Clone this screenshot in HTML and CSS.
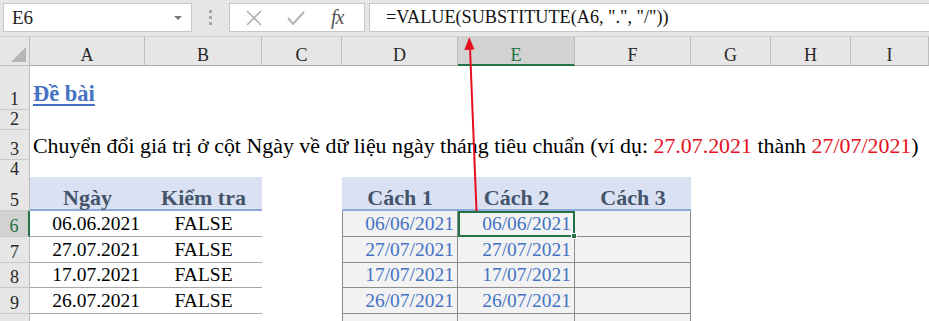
FILE: index.html
```html
<!DOCTYPE html>
<html lang="vi">
<head>
<meta charset="utf-8">
<title>Excel</title>
<link rel="stylesheet" href="styles.css">
</head>
<body>
<div class="app">
  <div class="toolbar">
    <div class="namebox"><span class="namebox-text">E6</span><span class="caret"></span></div>
    <div class="grip"><i></i><i></i><i></i></div>
    <div class="fxbox">
      <svg class="ic" width="18" height="18" viewBox="0 0 18 18"><path d="M2 2 L16 16 M16 2 L2 16" stroke="#b3b3b3" stroke-width="1.6" fill="none"/></svg>
      <svg class="ic" width="20" height="18" viewBox="0 0 20 18"><path d="M2 9 L7 15 L18 3" stroke="#b3b3b3" stroke-width="2" fill="none"/></svg>
      <span class="fx">fx</span>
    </div>
    <div class="formula">=VALUE(SUBSTITUTE(A6, ".", "/"))</div>
  </div>

  <div class="sheet">
    <div class="row hdr">
      <div class="corner"><span class="tri"></span></div>
      <div class="ch">A</div><div class="ch">B</div><div class="ch">C</div><div class="ch">D</div>
      <div class="ch ch-sel">E</div><div class="ch">F</div><div class="ch">G</div><div class="ch">H</div><div class="ch">I</div>
    </div>

    <div class="row r1">
      <div class="rh">1</div>
      <div class="c span"><span class="title">Đề bài</span></div>
    </div>
    <div class="row r2">
      <div class="rh">2</div>
      <div class="c span"></div>
    </div>
    <div class="row r3">
      <div class="rh">3</div>
      <div class="c span text"><span>Chuyển đổi giá trị ở cột Ngày về dữ liệu ngày tháng tiêu chuẩn (ví dụ: <span class="red">27.07.2021</span> thành <span class="red">27/07/2021</span>)</span></div>
    </div>
    <div class="row r4">
      <div class="rh">4</div>
      <div class="c span"></div>
    </div>

    <div class="row r5">
      <div class="rh">5</div>
      <div class="c th">Ngày</div>
      <div class="c th">Kiểm tra</div>
      <div class="c"></div>
      <div class="c th">Cách 1</div>
      <div class="c th">Cách 2</div>
      <div class="c th">Cách 3</div>
      <div class="c"></div><div class="c"></div><div class="c"></div>
    </div>

    <div class="row rd">
      <div class="rh rh-sel">6</div>
      <div class="c td1 date">06.06.2021</div>
      <div class="c td1">FALSE</div>
      <div class="c"></div>
      <div class="c td2 first">06/06/2021</div>
      <div class="c td2 sel">06/06/2021<span class="handle"></span></div>
      <div class="c td2"></div>
      <div class="c"></div><div class="c"></div><div class="c"></div>
    </div>
    <div class="row rd">
      <div class="rh">7</div>
      <div class="c td1 date">27.07.2021</div>
      <div class="c td1">FALSE</div>
      <div class="c"></div>
      <div class="c td2 first">27/07/2021</div>
      <div class="c td2">27/07/2021</div>
      <div class="c td2"></div>
      <div class="c"></div><div class="c"></div><div class="c"></div>
    </div>
    <div class="row rd r8">
      <div class="rh">8</div>
      <div class="c td1 date">17.07.2021</div>
      <div class="c td1">FALSE</div>
      <div class="c"></div>
      <div class="c td2 first">17/07/2021</div>
      <div class="c td2">17/07/2021</div>
      <div class="c td2"></div>
      <div class="c"></div><div class="c"></div><div class="c"></div>
    </div>
    <div class="row rd">
      <div class="rh">9</div>
      <div class="c td1 date">26.07.2021</div>
      <div class="c td1">FALSE</div>
      <div class="c"></div>
      <div class="c td2 first">26/07/2021</div>
      <div class="c td2">26/07/2021</div>
      <div class="c td2"></div>
      <div class="c"></div><div class="c"></div><div class="c"></div>
    </div>
    <div class="row r10">
      <div class="rh"></div>
      <div class="c"></div><div class="c"></div><div class="c"></div>
      <div class="c td2 first"></div><div class="c td2"></div><div class="c td2"></div>
      <div class="c"></div><div class="c"></div><div class="c"></div>
    </div>
  </div>

  <svg class="arrow" width="929" height="321" viewBox="0 0 929 321">
    <line x1="476.5" y1="211" x2="470" y2="48" stroke="#e5101f" stroke-width="2"/>
    <polygon points="469.3,37 464.3,50 474.5,49.6" fill="#e5101f"/>
  </svg>
</div>
</body>
</html>
```

FILE: styles.css
```css
* { box-sizing: border-box; }
html, body { margin: 0; padding: 0; }
body {
  width: 929px;
  height: 321px;
  overflow: hidden;
  background: #ffffff;
  font-family: "Liberation Serif", Tinos, "Times New Roman", Times, "DejaVu Serif", serif;
  color: #000;
}
.app { position: relative; width: 929px; height: 321px; overflow: hidden; }

/* toolbar */
.toolbar {
  height: 36px;
  background: #e6e6e6;
  display: flex;
  align-items: flex-start;
  padding-top: 3px;
}
.namebox {
  margin-left: 3px;
  width: 189px;
  height: 29px;
  background: #fff;
  border: 1px solid #c6c6c6;
  display: flex;
  align-items: center;
  justify-content: space-between;
  padding: 0 9px 0 8px;
}
.namebox-text { font-size: 19px; color: #222; }
.caret {
  width: 0; height: 0;
  border-left: 4px solid transparent;
  border-right: 4px solid transparent;
  border-top: 4px solid #7a7a7a;
}
.grip {
  width: 37px;
  height: 29px;
  display: flex;
  flex-direction: column;
  align-items: center;
  justify-content: center;
  gap: 3px;
}
.grip i { display: block; width: 3px; height: 3px; background: #a6a6a6; }
.fxbox {
  width: 136px;
  height: 29px;
  background: #fff;
  border: 1px solid #c6c6c6;
  display: flex;
  align-items: center;
  padding-left: 15px;
  gap: 23px;
}
.fx { font-style: italic; font-size: 20px; color: #555; margin-left: 2px; letter-spacing: -1px; }
.formula {
  margin-left: 4px;
  flex: 1;
  height: 29px;
  background: #fff;
  border: 1px solid #c6c6c6;
  border-right: none;
  font-size: 18.2px;
  line-height: 27px;
  padding-left: 16px;
  color: #111;
  white-space: nowrap;
}

/* sheet grid */
.row {
  display: grid;
  grid-template-columns: 30px 115px 117px 80px 116px 117px 116px 80px 80px 1fr;
}
.hdr { height: 30px; background: #e6e6e6; border-top: 1px solid #d0d0d0; }
.corner {
  border-right: 1px solid #bdbdbd;
  border-bottom: 1px solid #bdbdbd;
  position: relative;
}
.tri {
  position: absolute;
  right: 3px; bottom: 3px;
  width: 0; height: 0;
  border-left: 15px solid transparent;
  border-bottom: 15px solid #b5b5b5;
}
.ch {
  border-right: 1px solid #bdbdbd;
  border-bottom: 1px solid #ababab;
  font-size: 18px;
  line-height: 17px;
  color: #262626;
  display: flex;
  align-items: flex-end;
  justify-content: center;
  padding-bottom: 1px;
}
.ch-sel {
  background: #d2d2d2;
  color: #217346;
  border-bottom: 2px solid #217346;
  padding-bottom: 0;
}
.rh {
  background: #e6e6e6;
  border-right: 1px solid #bdbdbd;
  border-bottom: 1px solid #c8c8c8;
  font-size: 18px;
  color: #262626;
  display: flex;
  align-items: flex-end;
  justify-content: center;
  padding-bottom: 1px;
  line-height: 18px;
}
.rh-sel {
  background: #d2d2d2;
  color: #217346;
  border-right: 2px solid #217346;
}

.r1 { height: 44px; }
.r2 { height: 20px; }
.r3 { height: 30px; }
.r4 { height: 17px; }
.r5 { height: 34px; }
.rd { height: 26px; }
.r8 { height: 25px; }
.r10 { height: 20px; }

.c {
  display: flex;
  align-items: flex-end;
  white-space: nowrap;
  min-width: 0;
}
.span { grid-column: 2 / -1; }
.r1 .span { padding-left: 3px; padding-bottom: 3px; }
.title {
  font-size: 22.5px;
  font-weight: bold;
  color: #4472c4;
  text-decoration: underline;
  text-underline-offset: 3px;
}
.text {
  font-size: 21.9px;
  padding-left: 3px;
  padding-bottom: 1px;
}
.red { color: #e5101f; }

.th {
  background: #d9e1f2;
  border-bottom: 2px solid #8ea9db;
  justify-content: center;
  font-weight: bold;
  font-size: 22px;
  line-height: 23px;
  color: #44546a;
  padding-bottom: 0;
}
.td1 {
  justify-content: center;
  font-size: 19.5px;
  border-bottom: 1px solid #a6a6a6;
  padding-bottom: 1px;
}
.td1.date { justify-content: flex-end; padding-right: 5px; }
.td2 {
  background: #f2f2f2;
  border-right: 1px solid #8c8c8c;
  border-bottom: 1px solid #8c8c8c;
  justify-content: flex-end;
  font-size: 19.5px;
  color: #4472c4;
  padding-right: 3px;
  padding-bottom: 1px;
}
.td2.first { border-left: 1px solid #8c8c8c; }
.sel {
  position: relative;
  background: #f2f2f2;
  outline: 2px solid #217346;
  outline-offset: -2px;
}
.handle {
  position: absolute;
  right: -3px;
  bottom: -3px;
  width: 6px;
  height: 6px;
  background: #217346;
  border: 1px solid #fff;
}

.arrow { position: absolute; left: 0; top: 0; pointer-events: none; }
```
